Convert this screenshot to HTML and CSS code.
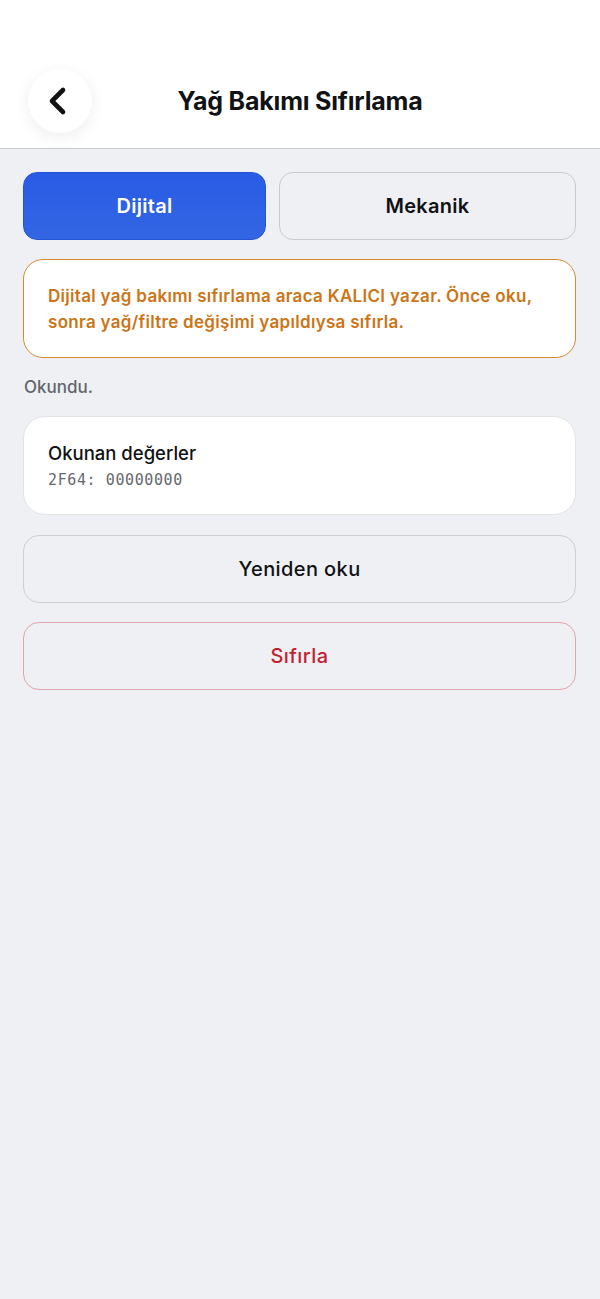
FILE: index.html
```html
<!DOCTYPE html>
<html lang="tr">
<head>
  <meta charset="UTF-8">
  <title>Yağ Bakımı Sıfırlama</title>
  <link rel="stylesheet" href="styles.css">
</head>
<body>
  <header class="top-bar">
    <button class="back-btn" aria-label="Geri">
      <svg width="24" height="30" viewBox="0 0 24 30">
        <path d="M17 4 L6 15 L17 26" fill="none" stroke="#111" stroke-width="4.6" stroke-linecap="round" stroke-linejoin="round"/>
      </svg>
    </button>
    <h1>Yağ Bakımı Sıfırlama</h1>
    <span></span>
  </header>

  <main class="container">
    <div class="tabs">
      <button class="tab active">Dijital</button>
      <button class="tab">Mekanik</button>
    </div>

    <div class="warning">
      Dijital yağ bakımı sıfırlama araca KALICI yazar. Önce oku,<br>
      sonra yağ/filtre değişimi yapıldıysa sıfırla.
    </div>

    <div class="status">Okundu.</div>

    <div class="card">
      <div class="card-title">Okunan değerler</div>
      <div class="card-value">2F64: 00000000</div>
    </div>

    <button class="action">Yeniden oku</button>
    <button class="action danger">Sıfırla</button>
  </main>
</body>
</html>
```

FILE: styles.css
```css
:root {
  --bg: #eff0f4;
  --text: #111214;
  --primary: #2b5ee6;
  --warn: #cc7416;
  --danger: #c42130;
}

body {
  font-family: 'Inter', 'Noto Sans', sans-serif;
  background: var(--bg);
  color: var(--text);
  margin: 0;
  padding: 0;
  min-height: 100vh;
}

button {
  font-family: inherit;
  cursor: pointer;
}

.top-bar {
  background: white;
  border-bottom: 1px solid #c9cacd;
  display: grid;
  grid-template-columns: 64px 1fr 64px;
  align-items: center;
  padding: 69px 28px 15px;
}

.back-btn {
  width: 64px;
  height: 64px;
  border-radius: 50%;
  border: none;
  background: white;
  box-shadow: 0 4px 16px rgba(0, 0, 0, 0.07);
  display: flex;
  align-items: center;
  justify-content: center;
  padding: 0 4px 0 0;
}

.top-bar h1 {
  margin: 0;
  text-align: center;
  font-size: 25px;
  font-weight: 700;
  letter-spacing: -0.2px;
}

.container {
  display: flex;
  flex-direction: column;
  padding: 23px 24px 0 23px;
}

.tabs {
  display: grid;
  grid-template-columns: 243fr 297fr;
  gap: 13px;
}

.tab {
  height: 68px;
  border-radius: 14px;
  border: 1.5px solid #c8cad0;
  background: var(--bg);
  color: var(--text);
  font-size: 20px;
  font-weight: 600;
  letter-spacing: 0.3px;
}

.tab.active {
  background: linear-gradient(180deg, #2a5be6, #3266e3);
  border-color: #2453d6;
  color: white;
}

.warning {
  margin-top: 19px;
  background: white;
  border: 1.5px solid #d68a2e;
  border-radius: 20px;
  padding: 23px 16px 22px 24px;
  color: var(--warn);
  font-size: 17px;
  font-weight: 600;
  line-height: 26px;
  letter-spacing: 0.3px;
  white-space: nowrap;
}

.status {
  margin-top: 18px;
  line-height: 22px;
  font-size: 17px;
  font-weight: 500;
  color: #63666c;
  padding-left: 1px;
}

.card {
  margin-top: 18px;
  background: white;
  border: 1px solid #e2e3e7;
  border-radius: 22px;
  height: 99px;
  box-sizing: border-box;
  padding: 24px 24px 0;
}

.card-title {
  font-size: 18.5px;
  font-weight: 500;
  line-height: 24px;
}

.card-value {
  margin-top: 5px;
  font-family: 'DejaVu Sans Mono', 'Liberation Mono', monospace;
  font-size: 15px;
  letter-spacing: 0.6px;
  color: #66686d;
  line-height: 20px;
}

.action {
  margin-top: 20px;
  height: 68px;
  border-radius: 16px;
  border: 1.5px solid #cdced3;
  background: var(--bg);
  color: var(--text);
  font-size: 20px;
  font-weight: 500;
  letter-spacing: 0.4px;
}

.action.danger {
  margin-top: 19px;
  border-color: #e3a5aa;
  color: var(--danger);
}
```
